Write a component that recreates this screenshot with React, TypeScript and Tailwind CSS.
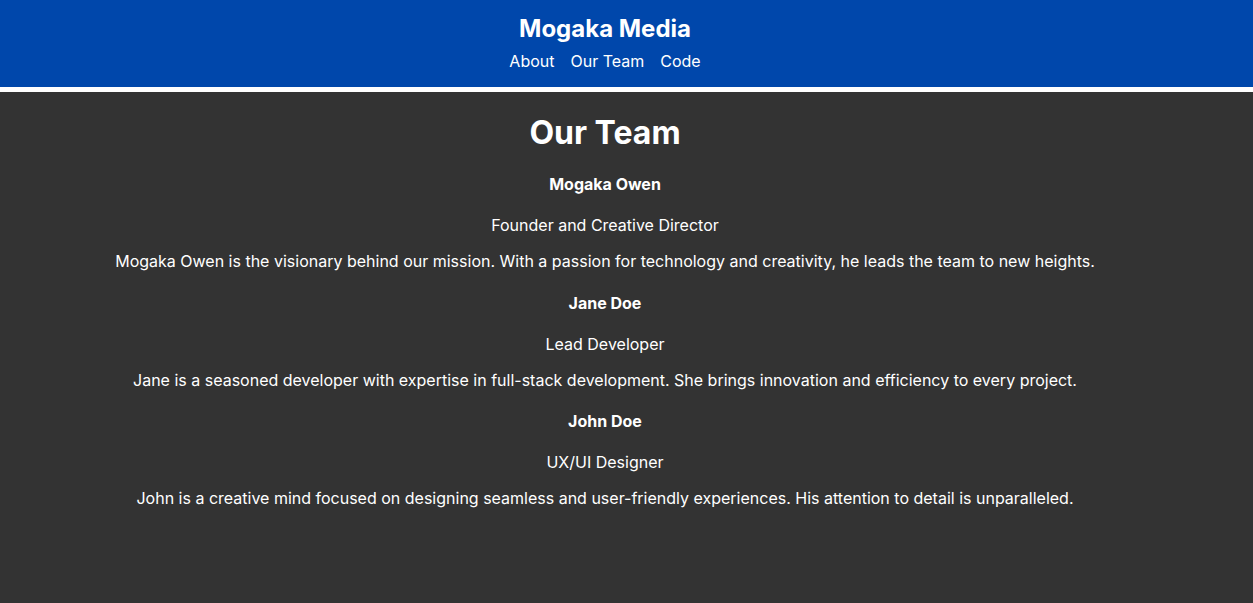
import React from "react";

const team = [
  {
    name: "Mogaka Owen",
    role: "Founder and Creative Director",
    desc: "Mogaka Owen is the visionary behind our mission. With a passion for technology and creativity, he leads the team to new heights.",
  },
  {
    name: "Jane Doe",
    role: "Lead Developer",
    desc: "Jane is a seasoned developer with expertise in full-stack development. She brings innovation and efficiency to every project.",
  },
  {
    name: "John Doe",
    role: "UX/UI Designer",
    desc: "John is a creative mind focused on designing seamless and user-friendly experiences. His attention to detail is unparalleled.",
  },
];

export default function App() {
  return (
    <div
      className="min-h-[603px] bg-[#333333] text-white text-center"
      style={{ fontFamily: "Inter, 'Noto Sans', sans-serif" }}
    >
      <header className="bg-[#0047ab] pt-[14px] pb-4 pr-[43px] border-b-[5px] border-white">
        <h1 className="text-[24px] font-bold leading-[29px]">Mogaka Media</h1>
        <nav className="mt-[9px] flex justify-center gap-4 text-[16px] leading-[19px]">
          <a href="#">About</a>
          <a href="#">Our Team</a>
          <a href="#">Code</a>
        </nav>
      </header>
      <main className="pt-[21px] pr-[43px]">
        <h2 className="text-[32px] font-bold leading-[39px]">Our Team</h2>
        <div className="mt-[22px] flex flex-col">
          {team.map((m, i) => (
            <div key={m.name} className={i === 0 ? "" : "mt-[21.5px]"}>
              <h3 className="text-[16px] font-bold leading-5">{m.name}</h3>
              <p className="mt-[21px] text-[16px] leading-5">{m.role}</p>
              <p className="mt-4 text-[16px] leading-5">{m.desc}</p>
            </div>
          ))}
        </div>
      </main>
    </div>
  );
}
